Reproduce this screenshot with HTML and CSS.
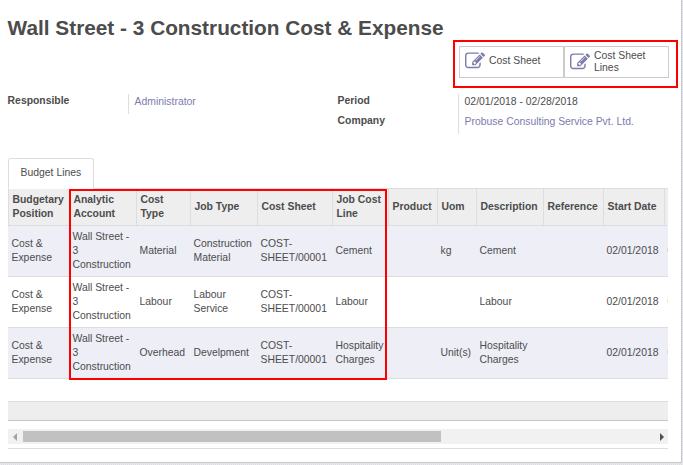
FILE: index.html
```html
<!DOCTYPE html>
<html lang="en">
<head>
<meta charset="utf-8">
<title>Wall Street - 3 Construction Cost &amp; Expense</title>
<link rel="stylesheet" href="styles.css">
</head>
<body>
<svg class="defs" width="0" height="0"><symbol id="edit" viewBox="0 0 1792 1792"><path d="M888 1184l116-116-152-152-116 116v56h96v96h56zm440-720q-16-16-33 1l-350 350q-17 17-1 33t33-1l350-350q17-17 1-33zm80 594v190q0 119-84.5 203.5t-203.5 84.5h-832q-119 0-203.5-84.5t-84.5-203.5v-832q0-119 84.5-203.5t203.5-84.5h832q63 0 117 25 15 7 18 23 3 17-9 29l-49 49q-14 14-32 8-23-6-45-6h-832q-66 0-113 47t-47 113v832q0 66 47 113t113 47h832q66 0 113-47t47-113v-126q0-13 9-22l64-64q15-15 35-7t20 29zm-96-738l288 288-672 672h-288v-288zm444 132l-92 92-288-288 92-92q28-28 68-28t68 28l152 152q28 28 28 68t-28 68z"/></symbol></svg>
<main class="sheet">
  <h1>Wall Street - 3 Construction Cost &amp; Expense</h1>
  <div class="buttons">
    <button><svg><use href="#edit"/></svg><span>Cost Sheet</span></button>
    <button class="two-line"><svg><use href="#edit"/></svg><span>Cost Sheet<br>Lines</span></button>
  </div>
  <div class="fields">
    <dl><dt>Responsible</dt><dd class="link">Administrator</dd></dl>
    <dl><dt>Period</dt><dd>02/01/2018 - 02/28/2018</dd><dt>Company</dt><dd class="link">Probuse Consulting Service Pvt. Ltd.</dd></dl>
  </div>
  <div class="tabs"><div class="tab">Budget Lines</div></div>
  <div class="scroller">
    <table>
      <colgroup><col class="c1"><col class="c2"><col class="c3"><col class="c4"><col class="c5"><col class="c6"><col class="c7"><col class="c8"><col class="c9"><col class="c10"><col class="c11"><col class="c12"></colgroup>
      <thead><tr><th>Budgetary<br>Position</th><th>Analytic<br>Account</th><th>Cost<br>Type</th><th>Job Type</th><th>Cost Sheet</th><th>Job Cost<br>Line</th><th>Product</th><th>Uom</th><th>Description</th><th>Reference</th><th>Start Date</th><th></th></tr></thead>
      <tbody>
        <tr><td>Cost &amp;<br>Expense</td><td>Wall Street -<br>3<br>Construction</td><td>Material</td><td>Construction<br>Material</td><td>COST-<br>SHEET/00001</td><td>Cement</td><td></td><td>kg</td><td>Cement</td><td></td><td>02/01/2018</td><td>0</td></tr>
        <tr><td>Cost &amp;<br>Expense</td><td>Wall Street -<br>3<br>Construction</td><td>Labour</td><td>Labour<br>Service</td><td>COST-<br>SHEET/00001</td><td>Labour</td><td></td><td></td><td>Labour</td><td></td><td>02/01/2018</td><td>0</td></tr>
        <tr><td>Cost &amp;<br>Expense</td><td>Wall Street -<br>3<br>Construction</td><td>Overhead</td><td>Develpment</td><td>COST-<br>SHEET/00001</td><td>Hospitality<br>Charges</td><td></td><td>Unit(s)</td><td>Hospitality<br>Charges</td><td></td><td>02/01/2018</td><td>0</td></tr>
        <tr class="blank"><td colspan="12"></td></tr>
      </tbody>
      <tfoot><tr><td colspan="12"></td></tr></tfoot>
    </table>
    <div class="highlight"></div>
  </div>
  <div class="scrollbar"><i class="left"></i><div class="thumb"></div><i class="right"></i></div>
</main>
</body>
</html>
```
FILE: styles.css
```css
* { box-sizing: border-box; }
body {
  margin: 0;
  height: 465px;
  overflow: hidden;
  background: repeating-conic-gradient(#dcdce0 0 25%, #ececee 0 50%) 0 0 / 2px 2px;
  color: #4c4c4c;
  font: 10.4px/14px "Liberation Sans", Arial, sans-serif;
}
.defs { position: absolute; }
.sheet {
  width: 682px;
  height: 463px;
  padding: 15px 13px 0 7.6px;
  background: #fff;
  border-right: 1px solid #c8c8d3;
  border-bottom: 1px solid #c8c8d3;
}
h1 { margin: 0; font-size: 20.8px; line-height: 25px; font-weight: bold; white-space: nowrap; }
.buttons {
  display: flex;
  width: 225px;
  height: 48px;
  margin-left: 445.4px;
  padding: 4px;
  border: 2px solid #f00;
}
button {
  display: flex;
  align-items: center;
  width: 105px;
  height: 32px;
  padding: 0 0 2px 5px;
  background: #fff;
  border: 1px solid #ccc;
  color: #4c4c4c;
  font: inherit;
  line-height: 12px;
  text-align: left;
}
.two-line { padding-bottom: 0; }
button svg { width: 20px; height: 20px; fill: #7c7bad; margin-right: 4px; }
.fields { display: flex; height: 41px; margin-top: 6px; }
dl { display: grid; grid-template-columns: 120.4px 1fr; grid-auto-rows: 20px; align-content: start; width: 330px; margin: 0; white-space: nowrap; }
dt { font-weight: bold; line-height: 13px; }
dd { margin: 0; padding-left: 5.6px; border-left: 1px solid #ddd; line-height: 15px; }
.link { color: #7c7bad; }
.tabs, .scroller, .scrollbar { width: 660px; margin-left: 0.4px; }
.tabs { display: flex; height: 31px; margin-top: 23px; border-bottom: 1px solid #ddd; }
.tab { width: 86px; height: 31px; border: 1px solid #ddd; border-bottom-color: #fff; border-radius: 3px 3px 0 0; padding-left: 11.6px; line-height: 27px; background: #fff; white-space: nowrap; }
.scroller { position: relative; height: 232px; overflow: hidden; }
table { width: 660px; table-layout: fixed; border-collapse: separate; border-spacing: 0; }
.c1 { width: 61px; } .c2 { width: 67px; } .c3 { width: 54px; } .c4 { width: 67px; }
.c5 { width: 75px; } .c6 { width: 56px; } .c7 { width: 49px; } .c8 { width: 39px; }
.c9 { width: 67px; } .c10 { width: 60px; } .c11 { width: 61px; } .c12 { width: 4px; }
th { height: 37px; padding: 0 0 0 3.5px; background: #eee; border-left: 1px solid #ddd; border-bottom: 1px solid #ddd; text-align: left; white-space: nowrap; }
td { height: 51px; padding: 0 0 0 3.5px; border-bottom: 1px solid #ddd; white-space: nowrap; }
th:last-child { padding: 0; }
tbody td:last-child { padding-left: 3.4px; }
tbody tr:nth-child(odd) { background: #eeeef7; }
tbody .blank td { height: 23px; }
tfoot td { height: 19px; background: #eee; border-color: #c6c6c6; }
.highlight { position: absolute; left: 61px; top: 0; width: 318px; height: 191px; border: 2px solid #f00; }
.scrollbar { display: flex; align-items: center; justify-content: space-between; height: 28px; padding: 4px 4px 0 5px; border-bottom: 1px solid #ddd; background: linear-gradient(#f1f1f1, #f1f1f1) 0 8px / 100% 15px no-repeat; }
.thumb { width: 418px; height: 11px; margin: 0 auto 0 6px; background: #c1c1c1; }
.left, .right { border: solid transparent; border-width: 4px 0; }
.left { border-right: 4px solid #a3a3a3; }
.right { border-left: 4px solid #505050; }
```
